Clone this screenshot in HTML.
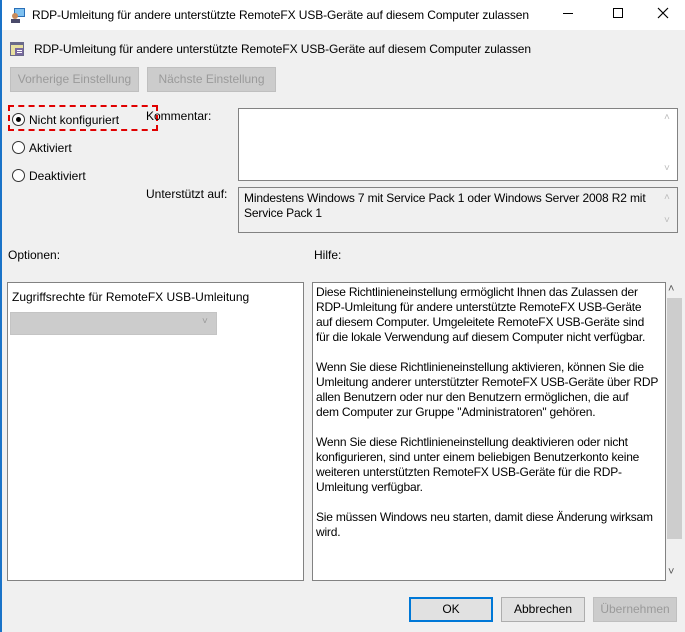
<!DOCTYPE html>
<html><head><meta charset="utf-8"><style>
*{margin:0;padding:0;box-sizing:border-box}
body{width:685px;height:632px;background:#f0f0f0;font-family:"Liberation Sans",sans-serif;font-size:12px;color:#000;position:relative;overflow:hidden}
.a{position:absolute;white-space:nowrap}
.btn{position:absolute;height:25px;border:1px solid #adadad;background:#e1e1e1;text-align:center;line-height:23px}
.dis{background:#cccccc;border-color:#bfbfbf;color:#9a9a9a}
.rad{position:absolute;width:13px;height:13px;border:1px solid #333;border-radius:50%;background:#fff}
</style></head><body>
<div class="a" style="left:0;top:0;width:685px;height:30px;background:#fff"></div>
<div class="a" style="left:0;top:0;width:2px;height:632px;background:#1a73c8"></div>
<svg class="a" style="left:10px;top:7px" width="16" height="16"><rect x="4" y="1" width="11" height="9" fill="#2a6fb8"/><rect x="5" y="2" width="9" height="7" fill="#7fc1f0"/><circle cx="5" cy="9" r="3" fill="#c98a5a"/><rect x="1" y="12" width="9" height="4" fill="#4a4a6a"/></svg>
<div class="a" style="left:32px;top:8px;letter-spacing:-0.1px">RDP-Umleitung für andere unterstützte RemoteFX USB-Geräte auf diesem Computer zulassen</div>
<div class="a" style="left:563px;top:13px;width:10px;height:1px;background:#000"></div>
<div class="a" style="left:613px;top:8px;width:10px;height:10px;border:1px solid #000"></div>
<svg class="a" style="left:657px;top:7px" width="12" height="12"><path d="M1 1L11 11M11 1L1 11" stroke="#000" stroke-width="1.2"/></svg>

<svg class="a" style="left:9px;top:41px" width="16" height="16"><rect x="1" y="1" width="14" height="14" fill="#6a6a8a"/><rect x="2" y="4" width="12" height="10" fill="#e8e0a0"/><rect x="6" y="7" width="8" height="7" fill="#7a6aa0"/><rect x="8" y="9" width="5" height="1" fill="#fff"/><rect x="8" y="11" width="5" height="1" fill="#fff"/></svg>
<div class="a" style="left:34px;top:42px;letter-spacing:-0.1px">RDP-Umleitung für andere unterstützte RemoteFX USB-Geräte auf diesem Computer zulassen</div>
<div class="btn dis" style="left:10px;top:67px;width:129px">Vorherige Einstellung</div>
<div class="btn dis" style="left:147px;top:67px;width:129px">Nächste Einstellung</div>

<div class="rad" style="left:12px;top:113px"></div><div class="a" style="left:16px;top:117px;width:5px;height:5px;border-radius:50%;background:#000"></div>
<div class="a" style="left:29px;top:113px">Nicht konfiguriert</div>
<div class="a" style="left:8px;top:105px;width:150px;height:26px;border:2px dashed #e00000"></div>
<div class="rad" style="left:12px;top:141px"></div><div class="a" style="left:29px;top:141px">Aktiviert</div>
<div class="rad" style="left:12px;top:169px"></div><div class="a" style="left:29px;top:169px">Deaktiviert</div>

<div class="a" style="left:146px;top:109px">Kommentar:</div>
<div class="a" style="left:238px;top:108px;width:440px;height:73px;background:#fff;border:1px solid #828282"></div>
<div class="a" style="left:664px;top:112px;color:#bbb;font-size:10px">˄</div>
<div class="a" style="left:664px;top:163px;color:#bbb;font-size:10px">˅</div>
<div class="a" style="left:146px;top:187px">Unterstützt auf:</div>
<div class="a" style="left:238px;top:187px;width:440px;height:46px;border:1px solid #828282"></div>
<div class="a" style="left:244px;top:191px;line-height:15px;letter-spacing:-0.15px">Mindestens Windows 7 mit Service Pack 1 oder Windows Server 2008 R2 mit<br>Service Pack 1</div>
<div class="a" style="left:664px;top:192px;color:#bbb;font-size:10px">˄</div>
<div class="a" style="left:664px;top:215px;color:#bbb;font-size:10px">˅</div>

<div class="a" style="left:8px;top:248px">Optionen:</div>
<div class="a" style="left:314px;top:248px">Hilfe:</div>
<div class="a" style="left:7px;top:282px;width:297px;height:299px;background:#fff;border:1px solid #828282"></div>
<div class="a" style="left:12px;top:290px">Zugriffsrechte für RemoteFX USB-Umleitung</div>
<div class="a" style="left:10px;top:312px;width:207px;height:23px;background:#cccccc;border:1px solid #c4c4c4"></div>
<div class="a" style="left:202px;top:316px;color:#999;font-size:10px">˅</div>

<div class="a" style="left:312px;top:282px;width:354px;height:299px;background:#fff;border:1px solid #828282"></div>
<div class="a" style="left:316px;top:285px;line-height:15px;letter-spacing:-0.2px">Diese Richtlinieneinstellung ermöglicht Ihnen das Zulassen der<br>RDP-Umleitung für andere unterstützte RemoteFX USB-Geräte<br>auf diesem Computer. Umgeleitete RemoteFX USB-Geräte sind<br>für die lokale Verwendung auf diesem Computer nicht verfügbar.<br><br>Wenn Sie diese Richtlinieneinstellung aktivieren, können Sie die<br>Umleitung anderer unterstützter RemoteFX USB-Geräte über RDP<br>allen Benutzern oder nur den Benutzern ermöglichen, die auf<br>dem Computer zur Gruppe "Administratoren" gehören.<br><br>Wenn Sie diese Richtlinieneinstellung deaktivieren oder nicht<br>konfigurieren, sind unter einem beliebigen Benutzerkonto keine<br>weiteren unterstützten RemoteFX USB-Geräte für die RDP-<br>Umleitung verfügbar.<br><br>Sie müssen Windows neu starten, damit diese Änderung wirksam<br>wird.</div>
<div class="a" style="left:668px;top:283px;color:#555;font-size:11px">˄</div>
<div class="a" style="left:667px;top:298px;width:15px;height:241px;background:#cdcdcd"></div>
<div class="a" style="left:668px;top:566px;color:#555;font-size:11px">˅</div>

<div class="btn" style="left:409px;top:597px;width:84px;border:2px solid #0078d7;line-height:21px">OK</div>
<div class="btn" style="left:501px;top:597px;width:84px">Abbrechen</div>
<div class="btn dis" style="left:593px;top:597px;width:84px">Übernehmen</div>
</body></html>
